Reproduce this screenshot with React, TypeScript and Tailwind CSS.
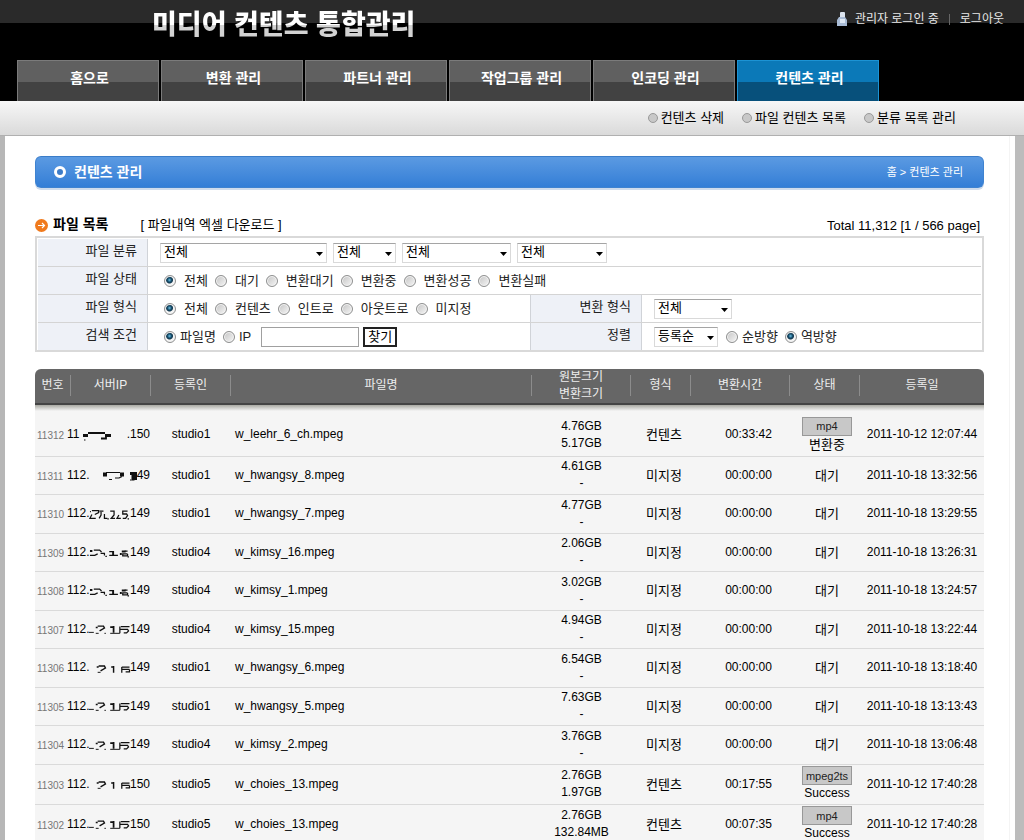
import React from "react";

const NAV = ["홈으로", "변환 관리", "파트너 관리", "작업그룹 관리", "인코딩 관리", "컨텐츠 관리"];
const SUB = ["컨텐츠 삭제", "파일 컨텐츠 목록", "분류 목록 관리"];

type Smudge = "bar" | "hook" | "digits" | "wave" | "block" | "loose";

const SMUDGES: Record<Smudge, React.ReactNode> = {
  bar: (
    <>
      <path d="M4 6.5h5M26 6.5h6" strokeWidth="3" />
      <path d="M9 4h17M22 9.5h5v-2" strokeWidth="1.8" />
      <path d="M5 11h1.5" strokeWidth="1.2" />
    </>
  ),
  hook: (
    <>
      <path d="M14 5.5h4M31 5.5h4" strokeWidth="4" />
      <path d="M17 3.5h14M33 7.5l-3 1.5h-4M20 10.5h3" strokeWidth="1.2" />
      <path d="M44 3.5v8M46.500 3v8M41 4.500h4" strokeWidth="3" />
      <path d="M41 11h1.5" strokeWidth="1.2" />
    </>
  ),
  digits: (
    <>
      <path d="M1 3.500h1M3 2.500h7v2l-4 2M3 6.500l-2 4h6M11 3h4M12.500 4v3l-2 3.500M16 6v4.500h3M22 3h4v4l-3 3.500h4M31 7l-2 3.500h4M40 3h-5v3h4l1 1.500-2 3h-3" strokeWidth="1.3" />
      <path d="M19 11h1.500M40 11h1.500" strokeWidth="1.2" />
    </>
  ),
  wave: (
    <>
      <path d="M1 5h2.500M25 5v4M34 5.500h4M34 8h-2" strokeWidth="2" />
      <path d="M5 4h6l2 2M9 8l-3 1.500H1M12 7.500h4v2M21 5.500h4M21 9.500h9M40 5h-3M40 8h-5v2h5v-2" strokeWidth="1.3" />
      <path d="M17 10.500h1.500M40 11h1.500" strokeWidth="1.2" />
    </>
  ),
  block: (
    <>
      <path d="M7 4.500h2M9 3h6l1 2-5 3" strokeWidth="1.5" />
      <path d="M22 4h3M25.500 3v7" strokeWidth="1.8" />
      <path d="M33 3.500h9M32 6.500h8l1 1.500-2 2h-3M32 3.500v7" strokeWidth="1.3" />
      <path d="M0 9.500h5M7 10.500h3M16 10.500h1.500M22 10.500h10" strokeWidth="1" />
    </>
  ),
  loose: (
    <>
      <path d="M8 5h2M10 4h6l1 2-5 3" strokeWidth="1.5" />
      <path d="M23 5h2M25.500 4v7" strokeWidth="1.5" />
      <path d="M34 5h8M34 7.500h8M34 5v6M42 7.500v2.500h-4" strokeWidth="1.3" />
      <path d="M9 10.500h3" strokeWidth="1" />
    </>
  ),
};

type Row = {
  no: number;
  ip: [string, Smudge, string];
  user: string;
  file: string;
  size: [string, string];
  kind: string;
  time: string;
  badge?: string;
  state: string;
  date: string;
};

const ROWS: Row[] = [
  { no: 11312, ip: ["11", "bar", ".150"], user: "studio1", file: "w_leehr_6_ch.mpeg", size: ["4.76GB", "5.17GB"], kind: "컨텐츠", time: "00:33:42", badge: "mp4", state: "변환중", date: "2011-10-12 12:07:44" },
  { no: 11311, ip: ["112.", "hook", "49"], user: "studio1", file: "w_hwangsy_8.mpeg", size: ["4.61GB", "-"], kind: "미지정", time: "00:00:00", state: "대기", date: "2011-10-18 13:32:56" },
  { no: 11310, ip: ["112.", "digits", "149"], user: "studio1", file: "w_hwangsy_7.mpeg", size: ["4.77GB", "-"], kind: "미지정", time: "00:00:00", state: "대기", date: "2011-10-18 13:29:55" },
  { no: 11309, ip: ["112.", "wave", "149"], user: "studio4", file: "w_kimsy_16.mpeg", size: ["2.06GB", "-"], kind: "미지정", time: "00:00:00", state: "대기", date: "2011-10-18 13:26:31" },
  { no: 11308, ip: ["112.", "wave", "149"], user: "studio4", file: "w_kimsy_1.mpeg", size: ["3.02GB", "-"], kind: "미지정", time: "00:00:00", state: "대기", date: "2011-10-18 13:24:57" },
  { no: 11307, ip: ["112.", "block", "149"], user: "studio4", file: "w_kimsy_15.mpeg", size: ["4.94GB", "-"], kind: "미지정", time: "00:00:00", state: "대기", date: "2011-10-18 13:22:44" },
  { no: 11306, ip: ["112.", "loose", "149"], user: "studio1", file: "w_hwangsy_6.mpeg", size: ["6.54GB", "-"], kind: "미지정", time: "00:00:00", state: "대기", date: "2011-10-18 13:18:40" },
  { no: 11305, ip: ["112.", "block", "149"], user: "studio1", file: "w_hwangsy_5.mpeg", size: ["7.63GB", "-"], kind: "미지정", time: "00:00:00", state: "대기", date: "2011-10-18 13:13:43" },
  { no: 11304, ip: ["112.", "block", "149"], user: "studio4", file: "w_kimsy_2.mpeg", size: ["3.76GB", "-"], kind: "미지정", time: "00:00:00", state: "대기", date: "2011-10-18 13:06:48" },
  { no: 11303, ip: ["112.", "loose", "150"], user: "studio5", file: "w_choies_13.mpeg", size: ["2.76GB", "1.97GB"], kind: "컨텐츠", time: "00:17:55", badge: "mpeg2ts", state: "Success", date: "2011-10-12 17:40:28" },
  { no: 11302, ip: ["112.", "block", "150"], user: "studio5", file: "w_choies_13.mpeg", size: ["2.76GB", "132.84MB"], kind: "컨텐츠", time: "00:07:35", badge: "mp4", state: "Success", date: "2011-10-12 17:40:28" },
];

function Select({ id, label, width, value = "전체" }: { id: string; label: string; width: string; value?: string }) {
  return (
    <div className={`relative h-5 ${width}`}>
      <select
        id={id}
        aria-label={label}
        className="block h-5 w-full appearance-none border border-[#d9d9d9] border-t-[#a5a5a5] bg-white pb-[3px] pl-[3px] text-[13px] leading-4 text-black"
      >
        <option>{value}</option>
      </select>
      <svg className="pointer-events-none absolute right-[4px] top-[9px] h-[4px] w-[7px]" viewBox="0 0 7 4" aria-hidden="true">
        <path d="M0 0h7L3.5 4z" fill="#000" />
      </svg>
    </div>
  );
}

function Radio({ name, label, checked, tight }: { name: string; label: string; checked?: boolean; tight?: boolean }) {
  return (
    <label className={`flex items-center whitespace-nowrap ${tight ? "gap-1" : "gap-2"}`}>
      <input
        type="radio"
        name={name}
        defaultChecked={checked}
        className="size-3 shrink-0 appearance-none rounded-full border border-[#8e8f8f] bg-[linear-gradient(135deg,#c4c4c4,#f6f6f6)] shadow-[inset_0_0_0_1px_#f4f4f4] checked:bg-[radial-gradient(circle_at_45%_40%,#6fc3e6_0,#17506f_2px,#12384f_3px,#f4f4f4_4px)]"
      />
      <span>{label}</span>
    </label>
  );
}

function FieldName({ children, wide }: { children: React.ReactNode; wide?: boolean }) {
  return (
    <div
      className={`flex h-full shrink-0 items-center justify-end border-r border-[#d0d3d8] bg-[#eef1f7] pb-1 pr-[10px] ${wide ? "w-[112px] border-l" : "w-[110px]"}`}
    >
      {children}
    </div>
  );
}

function FilterRow({ children, last }: { children: React.ReactNode; last?: boolean }) {
  return <div className={`flex items-center ${last ? "h-[27px]" : "h-7 border-b border-[#d4d4d4]"}`}>{children}</div>;
}

const HEADS: { key: string; lines: string[] }[] = [
  { key: "no", lines: ["번호"] },
  { key: "ip", lines: ["서버IP"] },
  { key: "user", lines: ["등록인"] },
  { key: "file", lines: ["파일명"] },
  { key: "size", lines: ["원본크기", "변환크기"] },
  { key: "kind", lines: ["형식"] },
  { key: "time", lines: ["변환시간"] },
  { key: "state", lines: ["상태"] },
  { key: "date", lines: ["등록일"] },
];

export default function App() {
  return (
    <div className="min-h-screen bg-white font-['Liberation_Sans','Noto_Sans_CJK_KR',sans-serif] text-[13px] leading-[17px] text-black">
      <header className="flex h-[101px] flex-col justify-between bg-[linear-gradient(#2a2a2a_23px,#000_23px)]">
        <div className="flex items-start justify-between pl-[152px] pr-5">
          <h1 className="mt-[5px] bg-[linear-gradient(#fff_20px,#d2d2d2_20px)] bg-clip-text text-[27px] font-black leading-10 text-transparent">
            미디어 컨텐츠 통합관리
          </h1>
          <div className="mt-[11px] flex items-center text-xs leading-4 text-[#e8e8e8]">
            <svg className="mr-2 h-[14px] w-[10px]" viewBox="0 0 10 14" aria-hidden="true">
              <rect x="3" y="0" width="5" height="6" rx="1" fill="#dbe3ee" />
              <path d="M2 5h6l2 3v6H0V8z" fill="#a9bcd6" />
              <path d="M3 7h5v4H3z" fill="#dfe9f5" />
            </svg>
            <span>관리자 로그인 중</span>
            <span className="mx-[10px] h-[11px] w-px bg-[#666]" />
            <a href="#logout">로그아웃</a>
          </div>
        </div>
        <nav className="flex gap-[2px] pl-[17px]">
          {NAV.map((item, i) => (
            <a
              key={item}
              href={`#menu-${i}`}
              className={`flex h-[41px] w-[142px] items-center justify-center border border-b-0 pb-[6px] pl-[3px] text-sm font-bold leading-5 text-white ${
                i === NAV.length - 1
                  ? "border-[#1c93d4] bg-[linear-gradient(#0b79b8_21px,#07507b_21px)]"
                  : "border-[#7b7b7b] bg-[linear-gradient(#606060_21px,#424242_21px)]"
              }`}
            >
              {item}
            </a>
          ))}
        </nav>
      </header>

      <div className="flex h-[35px] items-center justify-end gap-[18px] border-b border-[#b0b0b0] bg-linear-to-b from-[#f7f7f7] to-[#dadada] pb-px pr-[68px]">
        {SUB.map((item, i) => (
          <a key={item} href={`#sub-${i}`} className="flex items-center gap-[3px]">
            <span className="size-[10px] rounded-full border border-[#999] bg-[#c8c8c8]" />
            {item}
          </a>
        ))}
      </div>

      <div className="border-l-5 border-r-9 border-l-[#b7b7b7] border-r-[#bcbcbc]">
        <main className="mr-[5px] border-r border-[#f4f4f4] pl-[30px] pr-[25px] pt-5">
          <div className="flex h-8 items-center rounded-md border border-[#3f83d0] border-t-[#3a7cc8] bg-linear-to-b from-[#5b9ae2] to-[#337ed6] pb-px pl-[18px] pr-5 text-white shadow-[0_2px_0_#cfdcec]">
            <span className="size-3 rounded-full border-[3px] border-white bg-[#3d7cc8]" />
            <h2 className="ml-2 text-sm font-bold leading-5">컨텐츠 관리</h2>
            <span className="ml-auto text-[11px] leading-4">홈 &gt; 컨텐츠 관리</span>
          </div>

          <div className="flex h-12 items-end pb-[3px]">
            <svg className="mb-px mr-[5px] size-[13px]" viewBox="0 0 13 13" aria-hidden="true">
              <circle cx="6.5" cy="6.5" r="6.5" fill="#f07a1d" />
              <path d="M3 6.5h6.5M7 4l2.5 2.5L7 9" fill="none" stroke="#fff" strokeWidth="1.2" />
            </svg>
            <h3 className="text-sm font-bold leading-[17px]">파일 목록</h3>
            <a href="#excel" className="ml-8">
              [ 파일내역 엑셀 다운로드 ]
            </a>
            <span className="ml-auto pr-1 text-[13px] leading-[15px]">Total 11,312 [1 / 566 page]</span>
          </div>

          <form className="border-2 border-[#d9d9d9] p-px pb-0 text-[#222]" onSubmit={(e) => e.preventDefault()}>
            <FilterRow>
              <FieldName>
                <label htmlFor="cat1">파일 분류</label>
              </FieldName>
              <div className="ml-3 flex gap-[6px]">
                <Select id="cat1" label="파일 분류 1" width="w-[167px]" />
                <Select id="cat2" label="파일 분류 2" width="w-[63px]" />
                <Select id="cat3" label="파일 분류 3" width="w-[109px]" />
                <Select id="cat4" label="파일 분류 4" width="w-[90px]" />
              </div>
            </FilterRow>
            <FilterRow>
              <FieldName>파일 상태</FieldName>
              <div role="radiogroup" aria-label="파일 상태" className="ml-4 flex gap-[7px]">
                <Radio name="status" label="전체" checked />
                <Radio name="status" label="대기" />
                <Radio name="status" label="변환대기" />
                <Radio name="status" label="변환중" />
                <Radio name="status" label="변환성공" />
                <Radio name="status" label="변환실패" />
              </div>
            </FilterRow>
            <FilterRow>
              <FieldName>파일 형식</FieldName>
              <div role="radiogroup" aria-label="파일 형식" className="ml-4 flex flex-1 gap-[7px]">
                <Radio name="format" label="전체" checked />
                <Radio name="format" label="컨텐츠" />
                <Radio name="format" label="인트로" />
                <Radio name="format" label="아웃트로" />
                <Radio name="format" label="미지정" />
              </div>
              <FieldName wide>
                <label htmlFor="conv">변환 형식</label>
              </FieldName>
              <div className="w-[339px] pl-3">
                <Select id="conv" label="변환 형식" width="w-[78px]" />
              </div>
            </FilterRow>
            <FilterRow last>
              <FieldName>검색 조건</FieldName>
              <div className="ml-4 flex flex-1 items-center">
                <div role="radiogroup" aria-label="검색 조건" className="flex gap-[7px]">
                  <Radio name="cond" label="파일명" checked tight />
                  <Radio name="cond" label="IP" tight />
                </div>
                <input type="text" aria-label="검색어" className="ml-[10px] h-5 w-[98px] border border-[#a0a0a0] bg-white px-1" />
                <button type="submit" className="ml-1 h-5 w-[34px] border-2 border-[#222] bg-white pb-[3px] text-[13px] leading-4 text-black">
                  찾기
                </button>
              </div>
              <FieldName wide>
                <label htmlFor="sort">정렬</label>
              </FieldName>
              <div className="flex w-[339px] items-center pl-3">
                <Select id="sort" label="정렬" width="w-[64px]" value="등록순" />
                <div role="radiogroup" aria-label="정렬 방향" className="ml-2 flex gap-[7px]">
                  <Radio name="dir" label="순방향" tight />
                  <Radio name="dir" label="역방향" checked tight />
                </div>
              </div>
            </FilterRow>
          </form>

          <div className="mt-[17px] overflow-hidden rounded-t-md">
            <table className="w-full table-fixed border-collapse bg-[#f5f5f5]">
              <colgroup>
                <col className="w-[36px]" />
                <col className="w-[80px]" />
                <col className="w-[80px]" />
                <col />
                <col className="w-[99px]" />
                <col className="w-[60px]" />
                <col className="w-[99px]" />
                <col className="w-[70px]" />
                <col className="w-[124px]" />
              </colgroup>
              <thead>
                <tr className="h-[45px] bg-[linear-gradient(#666_34px,#444_34px,#444_36px,#a9a9a2_36px,#f5f5f5_42px)] text-xs leading-[17px] text-[#eee]">
                  {HEADS.map(({ key, lines }, i) => (
                    <th key={key} className="p-0 pt-[6px] align-top font-normal">
                      <div
                        className={`flex h-[21px] flex-col items-center justify-center whitespace-nowrap ${
                          i < HEADS.length - 1 ? "border-r border-[#8c8c8c]" : ""
                        }`}
                      >
                        {lines.map((line) => (
                          <span key={line}>{line}</span>
                        ))}
                      </div>
                    </th>
                  ))}
                </tr>
              </thead>
              <tbody>
                {ROWS.map((r, i) => (
                  <tr
                    key={r.no}
                    className={`border-b border-[#dadada] text-center text-xs leading-[17px] ${
                      i === 0 ? "h-[42px]" : r.badge ? "h-10" : "h-[38px] odd:h-[39px]"
                    }`}
                  >
                    <td className="p-0 pl-[2px] pt-[2px] text-left text-[10px] text-[#777]">{r.no}</td>
                    <td className="p-0">
                      <div className="-ml-1 grid w-[83px] grid-cols-[auto_1fr_auto] items-center">
                        <span>{r.ip[0]}</span>
                        <svg className="h-3 w-full overflow-visible" viewBox="0 0 42 12" preserveAspectRatio="xMinYMid meet" fill="none" stroke="#111" aria-hidden="true">
                          {SMUDGES[r.ip[1]]}
                        </svg>
                        <span>{r.ip[2]}</span>
                      </div>
                    </td>
                    <td className="p-0">{r.user}</td>
                    <td className="p-0 pl-1 text-left">{r.file}</td>
                    <td className="p-0">
                      {r.size[0]}
                      <br />
                      {r.size[1]}
                    </td>
                    <td className="p-0 pl-[6px] text-[13px]">{r.kind}</td>
                    <td className="p-0 pl-4">{r.time}</td>
                    <td className={`p-0 pl-1 ${r.state === "Success" ? "" : "text-[13px]"}`}>
                      {r.badge && (
                        <button type="button" className="mx-auto block h-[19px] w-[50px] border border-[#989898] bg-[#c8c8c8] text-[11px] leading-4 text-[#222]">
                          {r.badge}
                        </button>
                      )}
                      {r.state}
                    </td>
                    <td className="whitespace-nowrap p-0">{r.date}</td>
                  </tr>
                ))}
              </tbody>
            </table>
          </div>
        </main>
      </div>
    </div>
  );
}
